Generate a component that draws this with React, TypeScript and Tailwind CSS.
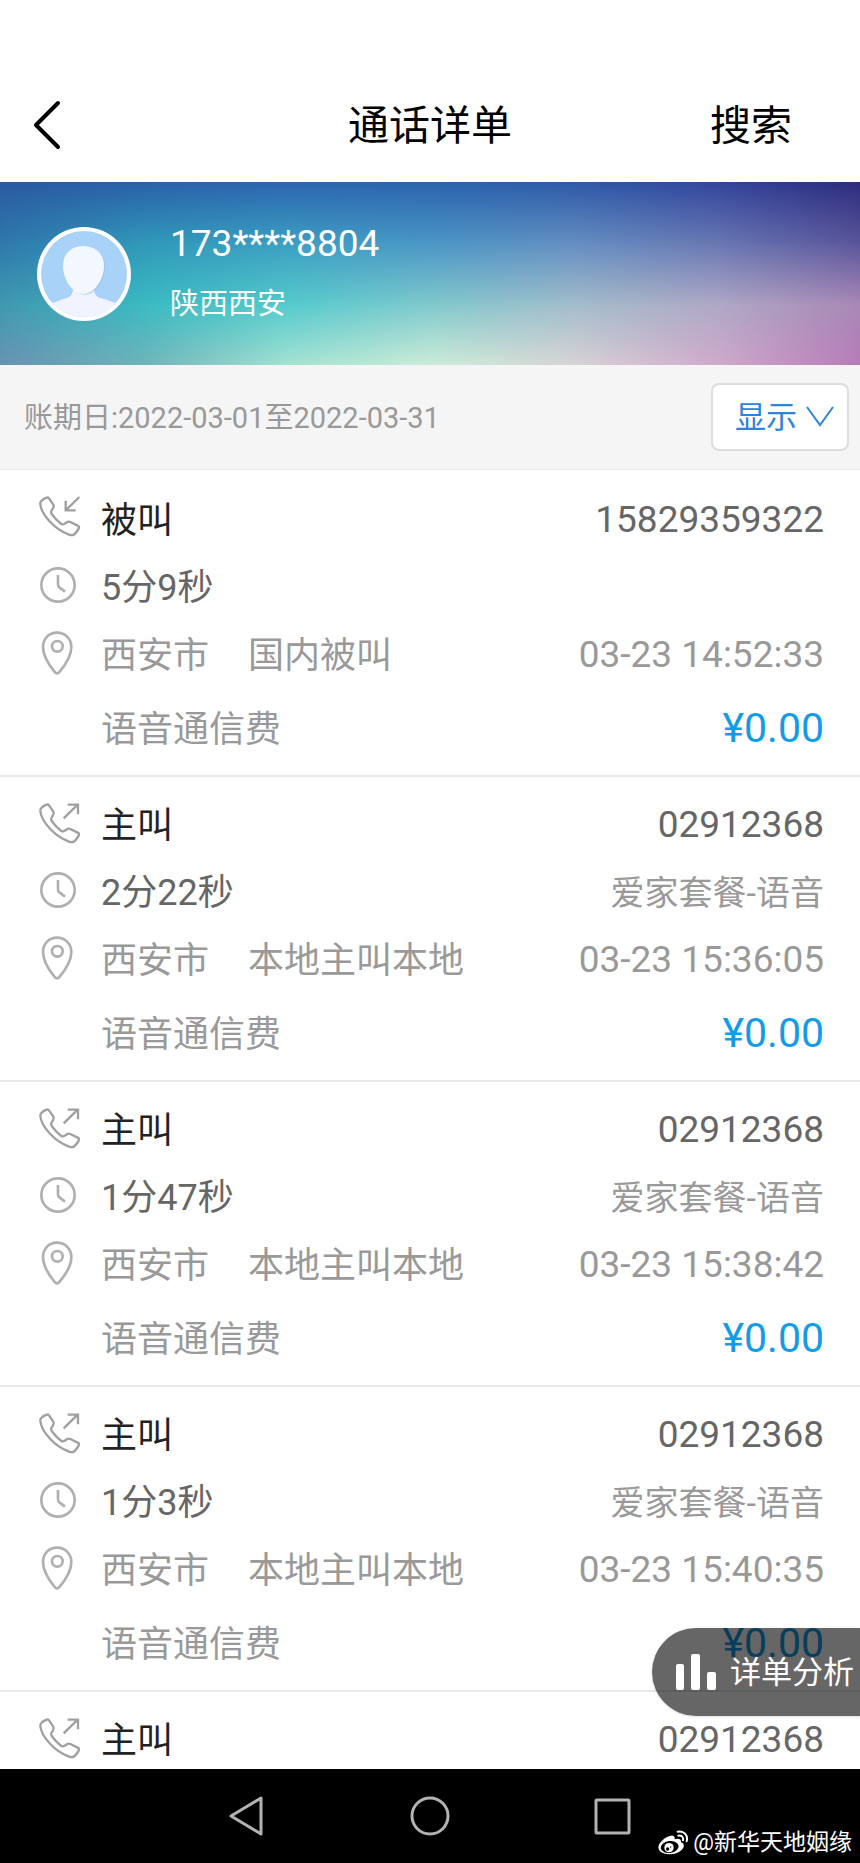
import { useState } from 'react';

interface CallRecord {
  id: number;
  type: 'incoming' | 'outgoing';
  number: string;
  duration: string;
  plan?: string;
  city: string;
  category: string;
  time: string;
  fee: string;
}

const records: CallRecord[] = [
  { id: 1, type: 'incoming', number: '15829359322', duration: '5分9秒', city: '西安市', category: '国内被叫', time: '03-23 14:52:33', fee: '¥0.00' },
  { id: 2, type: 'outgoing', number: '02912368', duration: '2分22秒', plan: '爱家套餐-语音', city: '西安市', category: '本地主叫本地', time: '03-23 15:36:05', fee: '¥0.00' },
  { id: 3, type: 'outgoing', number: '02912368', duration: '1分47秒', plan: '爱家套餐-语音', city: '西安市', category: '本地主叫本地', time: '03-23 15:38:42', fee: '¥0.00' },
  { id: 4, type: 'outgoing', number: '02912368', duration: '1分3秒', plan: '爱家套餐-语音', city: '西安市', category: '本地主叫本地', time: '03-23 15:40:35', fee: '¥0.00' },
];

// Colour rows of the banner, top to bottom; each row fades into the next one
const bannerRows = [
  ['#2a5aa0', '#2a61a9', '#2c66b0', '#2b64ac', '#2e5aa8', '#33459c', '#2c2c7c'],
  ['#2f78ac', '#3098b9', '#3c9ec1', '#4a96c5', '#648ec1', '#6877b2', '#5a559b'],
  ['#4098b0', '#3abac2', '#54cacc', '#80c8cc', '#a2bccb', '#aea8c5', '#a888b5'],
  ['#6893b2', '#70b4ba', '#a4e2d2', '#cbedd8', '#d8d4d6', '#d0aacc', '#b67cb8'],
];

function BannerArt() {
  return (
    <svg className="absolute inset-0 h-full w-full" viewBox="0 0 6 3" preserveAspectRatio="none" aria-hidden="true">
      <defs>
        {bannerRows.map((row, i) => (
          <linearGradient key={i} id={`row${i}`} x1="0" y1="0" x2="1" y2="0">
            {row.map((color, j) => (
              <stop key={j} offset={j / (row.length - 1)} stopColor={color} />
            ))}
          </linearGradient>
        ))}
        <linearGradient id="fade" x1="0" y1="0" x2="0" y2="1">
          <stop offset="0" stopColor="#fff" />
          <stop offset="1" stopColor="#fff" stopOpacity="0" />
        </linearGradient>
        {[0, 1, 2].map((i) => (
          <mask key={i} id={`mask${i}`} maskUnits="userSpaceOnUse" x="0" y={i} width="6" height="1">
            <rect x="0" y={i} width="6" height="1" fill="url(#fade)" />
          </mask>
        ))}
      </defs>
      {[0, 1, 2].map((i) => (
        <g key={i} shapeRendering="crispEdges">
          <rect x="0" y={i} width="6" height="1" fill={`url(#row${i + 1})`} />
          <rect x="0" y={i} width="6" height="1" fill={`url(#row${i})`} mask={`url(#mask${i})`} />
        </g>
      ))}
    </svg>
  );
}

function Avatar() {
  return (
    <svg className="h-[94px] w-[94px] shrink-0" viewBox="0 0 94 94" role="img" aria-label="头像">
      <defs>
        <clipPath id="avatarClip">
          <circle cx="47" cy="47" r="43" />
        </clipPath>
      </defs>
      <circle cx="47" cy="47" r="47" fill="#fff" />
      <g clipPath="url(#avatarClip)">
        <rect width="94" height="94" fill="#a8d2f8" />
        <path d="M10 80C15 75 24 73 30 71C35 69 36 66 36 60H57C57 66 58 69 63 71C70 73 79 75 84 80V94H10Z" fill="#f1f4fe" />
        <path d="M28 40C28 27 37 20 48 20C59 20 68 27 68 40C68 54 58 68 48 68C38 68 28 54 28 40Z" fill="#8fb9e6" opacity="0.5" />
        <path d="M26 39C26 26 35 19 46 19C58 19 67 26 67 39C67 53 57 67 46 67C36 67 26 53 26 39Z" fill="#f3f7ff" />
      </g>
    </svg>
  );
}

function PhoneIcon({ type }: { type: CallRecord['type'] }) {
  return (
    <svg
      className="h-[46px] w-12"
      viewBox="108 402 144 138"
      fill="none"
      stroke="#a0a0a0"
      strokeWidth="7"
      strokeLinejoin="round"
      aria-hidden="true"
    >
      <g transform={type === 'outgoing' ? 'translate(0 6)' : undefined}>
        <path d="M140 413Q144 411 147 415L160 434Q163 439 159 445L154 453Q152 457 155 462Q168 480 184 492Q189 495 194 491L202 486Q206 484 211 486L233 497Q239 500 236 506Q230 517 222 524Q216 527 207 524C165 508 124 465 121 432Q120 426 125 422Q131 416 140 413Z" />
        {type === 'incoming' ? (
          <path d="M238 411L198 450M197 422V451H227" strokeLinejoin="miter" />
        ) : (
          <path d="M191 454L233 413M203 413H234V442" strokeLinejoin="miter" />
        )}
      </g>
    </svg>
  );
}

function ClockIcon() {
  return (
    <svg className="h-11 w-11" viewBox="108 609 132 132" fill="none" stroke="#b0b0b0" strokeWidth="8" aria-hidden="true">
      <circle cx="174" cy="675" r="50" />
      <path d="M174 645V673Q174 679 178 682L195 695" />
    </svg>
  );
}

function PinIcon() {
  return (
    <svg className="h-12 w-11" viewBox="108 805 132 144" fill="none" stroke="#b0b0b0" strokeWidth="8" strokeLinejoin="round" aria-hidden="true">
      <path d="M171 816C146 816 129 835 129 859C129 883 146 912 164 934Q171 942 178 934C197 912 214 883 214 859C214 835 196 816 171 816Z" />
      <circle cx="172" cy="857" r="16" />
    </svg>
  );
}

function CallRow({ type, number }: Pick<CallRecord, 'type' | 'number'>) {
  return (
    <div className="flex h-[68px] items-center">
      <div className="w-[65px] shrink-0 pb-1">
        <PhoneIcon type={type} />
      </div>
      <span className="pt-1 text-[#222]">{type === 'incoming' ? '被叫' : '主叫'}</span>
      <span className="ml-auto pt-0.5 text-[37px] text-[#666]">{number}</span>
    </div>
  );
}

function RecordItem({ record }: { record: CallRecord }) {
  return (
    <li className="border-b-2 border-[#e8e8e8] pt-[13px] pr-9 pb-2 pl-9 text-[#999]">
      <CallRow type={record.type} number={record.number} />
      <div className="flex h-[68px] items-center">
        <div className="w-[65px] shrink-0 pb-1">
          <ClockIcon />
        </div>
        <span className="pt-0.5 text-[#666]">{record.duration}</span>
        {record.plan && <span className="ml-auto pt-0.5 text-[34px]">{record.plan}</span>}
      </div>
      <div className="flex h-[68px] items-center">
        <div className="w-[65px] shrink-0 pb-1">
          <PinIcon />
        </div>
        <span className="pt-0.5">{record.city}</span>
        <span className="ml-[39px] pt-0.5">{record.category}</span>
        <time className="ml-auto text-[37px]">{record.time}</time>
      </div>
      <div className="flex h-[78px] items-center justify-between pl-[65px]">
        <span className="pt-1">语音通信费</span>
        <span className="text-[41px] text-[#129be6]">{record.fee}</span>
      </div>
    </li>
  );
}

function WeiboLogo() {
  return (
    <svg className="h-7 w-8" viewBox="0 0 96 84" aria-hidden="true">
      <path d="M38 21C47 17 55 20 53 31C62 27 74 29 72 40C84 43 82 56 74 63C62 75 38 79 20 73C4 67 0 54 9 42C16 32 28 24 38 21Z" fill="#fff" />
      <ellipse cx="38" cy="54" rx="27" ry="18" transform="rotate(-8 38 54)" fill="#000" />
      <circle cx="36" cy="56" r="14" fill="#fff" />
      <circle cx="32" cy="60" r="5" fill="#000" />
      <circle cx="41" cy="54" r="2" fill="#000" />
      <path d="M62 8C80 4 94 18 89 37M64 20C74 18 80 25 78 34" fill="none" stroke="#fff" strokeWidth="6" strokeLinecap="round" />
    </svg>
  );
}

export default function App() {
  const [open, setOpen] = useState(false);

  return (
    <div className="flex h-screen flex-col overflow-hidden bg-white font-['Roboto','Noto_Sans_CJK_SC',sans-serif]">
      <header className="grid h-[182px] shrink-0 grid-cols-[1fr_auto_1fr] items-center pt-[70px] text-[41px] leading-[48px] text-black">
        <button type="button" aria-label="返回" className="justify-self-start pb-0.5 pl-[30px]">
          <svg className="h-[52px] w-8" viewBox="0 0 32 52" fill="none" stroke="#000" strokeWidth="4" strokeLinecap="round" strokeLinejoin="round" aria-hidden="true">
            <path d="M28 4L6 26L28 48" />
          </svg>
        </button>
        <h1>通话详单</h1>
        <button type="button" className="justify-self-end pr-[68px]">搜索</button>
      </header>

      <section className="relative h-[183px] shrink-0">
        <BannerArt />
        <div className="relative flex h-full items-center gap-[39px] pl-[37px] text-white">
          <Avatar />
          <div>
            <p className="text-[37px] leading-[60px]">173****8804</p>
            <p className="text-[29px] leading-[60px]">陕西西安</p>
          </div>
        </div>
      </section>

      <div className="flex h-[105px] shrink-0 items-center justify-between border-b border-[#e8e8e8] bg-[#f5f5f5] pr-[11px] pl-6">
        <p className="pt-0.5 text-[29px] leading-9 text-[#999]">账期日:2022-03-01至2022-03-31</p>
        <button
          type="button"
          aria-expanded={open}
          onClick={() => setOpen(!open)}
          className="flex h-[68px] items-center gap-2 rounded-lg border-2 border-[#ddd] bg-white pr-3 pl-[22px] text-[31px] leading-10 text-[#2d84da]"
        >
          <span className="pt-0.5">显示</span>
          <svg className="h-6 w-[30px]" viewBox="0 0 30 24" fill="none" stroke="currentColor" strokeWidth="2" aria-hidden="true">
            <path d="M2 2L15 20L28 2" />
          </svg>
        </button>
      </div>

      <main className="relative min-h-0 flex-1 overflow-hidden pt-0.5 text-[36px] leading-[44px]">
        <ul>
          {records.map((record) => (
            <RecordItem key={record.id} record={record} />
          ))}
          <li className="pt-[13px] pr-9 pl-9">
            <CallRow type="outgoing" number="02912368" />
          </li>
        </ul>
        <button
          type="button"
          className="absolute right-0 bottom-[53px] flex h-[88px] items-center gap-3.5 rounded-l-full bg-black/60 pr-[6px] pl-6 text-[31px] leading-10 text-white shadow-sm"
        >
          <svg className="h-9 w-10" viewBox="0 0 40 36" fill="#fff" aria-hidden="true">
            <rect x="0" y="10" width="8" height="26" rx="2" />
            <rect x="15" y="0" width="9" height="36" rx="2" />
            <rect x="31" y="18" width="9" height="18" rx="2" />
          </svg>
          <span className="pt-0.5">详单分析</span>
        </button>
      </main>

      <footer className="relative flex h-[94px] shrink-0 items-center justify-center gap-36 bg-black">
        <button type="button" aria-label="后退">
          <svg className="h-10 w-10" viewBox="0 0 40 40" fill="none" stroke="#b3b3b3" strokeWidth="3" strokeLinejoin="round" aria-hidden="true">
            <path d="M35 2V38L5 20Z" />
          </svg>
        </button>
        <button type="button" aria-label="主页">
          <svg className="h-10 w-10" viewBox="0 0 40 40" fill="none" stroke="#b3b3b3" strokeWidth="3" aria-hidden="true">
            <circle cx="20" cy="20" r="18" />
          </svg>
        </button>
        <button type="button" aria-label="最近任务">
          <svg className="h-10 w-10" viewBox="0 0 40 40" fill="none" stroke="#b3b3b3" strokeWidth="3" strokeLinejoin="round" aria-hidden="true">
            <rect x="2" y="4" width="33" height="33" rx="1" />
          </svg>
        </button>
        <div className="absolute right-2 bottom-1 flex items-center gap-1 text-[23px] leading-8 text-white">
          <WeiboLogo />
          <span>@新华天地姻缘</span>
        </div>
      </footer>
    </div>
  );
}
